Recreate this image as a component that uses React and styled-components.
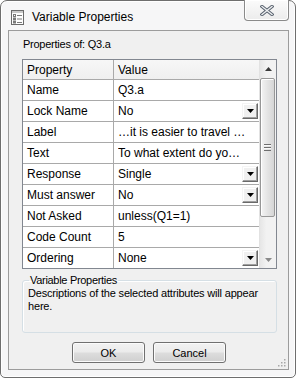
import React from 'react';
import styled, { createGlobalStyle } from 'styled-components';

const GlobalStyle = createGlobalStyle`
  html, body {
    margin: 0;
    padding: 0;
    background: #ffffff;
  }
  body {
    font-family: "Liberation Sans", Arial, sans-serif;
    color: #000;
  }
`;

const Window = styled.div`
  box-sizing: border-box;
  width: 296px;
  height: 378px;
  border: 1px solid #6e6e6e;
  border-radius: 7px 7px 5px 5px;
  background: #f6f6f7;
  box-shadow: inset 0 0 0 1px #ffffff;
  display: flex;
  flex-direction: column;
  padding: 0 6px 7px 7px;
`;

const TitleBar = styled.div`
  height: 29px;
  display: flex;
  align-items: flex-start;
  flex-shrink: 0;
`;

const TitleIcon = styled.svg`
  width: 15px;
  height: 15px;
  margin: 9px 0 0 2px;
  flex-shrink: 0;
`;

const TitleText = styled.div`
  margin: 9px 0 0 7px;
  font-size: 12px;
  line-height: 15px;
  color: #000;
`;

const CloseButton = styled.div`
  box-sizing: border-box;
  margin: -1px 0 0 auto;
  width: 45px;
  height: 21px;
  border: 1px solid #8a8a8a;
  border-top: none;
  border-radius: 0 0 4px 4px;
  background: linear-gradient(#fbfbfb, #ececec);
  box-shadow: inset 0 0 0 1px #ffffff;
  display: flex;
  align-items: center;
  justify-content: center;
`;

const Client = styled.div`
  position: relative;
  flex: 1;
  box-sizing: border-box;
  border: 1px solid #9c9c9c;
  background: #f0f0f0;
  padding: 0 10px 0 13px;
  display: flex;
  flex-direction: column;
`;

const SmallText = styled.div`
  font-size: 11px;
  line-height: 13px;
  letter-spacing: -0.25px;
`;

const OwnerLabel = styled(SmallText)`
  margin: 7px 0 0 1px;
  height: 13px;
`;

const Grid = styled.div`
  box-sizing: border-box;
  margin-top: 8px;
  width: 255px;
  height: 210px;
  border: 1px solid #828790;
  background: #ffffff;
  display: flex;
  overflow: hidden;
`;

const Table = styled.div`
  flex: 1;
  display: flex;
  flex-direction: column;
`;

const Row = styled.div`
  display: flex;
  height: ${({ $header }) => ($header ? 19 : 20)}px;
  border-bottom: 1px solid #a9a9a9;
  background: ${({ $header }) => ($header ? 'linear-gradient(#f7f7f7, #efefef)' : '#ffffff')};
  flex-shrink: 0;
`;

const Cell = styled.div`
  box-sizing: border-box;
  width: ${({ $w }) => $w}px;
  border-right: ${({ $last }) => ($last ? 'none' : '1px solid #a9a9a9')};
  padding-left: 4px;
  display: flex;
  align-items: center;
  font-size: 12px;
  white-space: nowrap;
  overflow: hidden;
`;

const CellText = styled.span`
  flex: 1;
  overflow: hidden;
`;

const DropButton = styled.div`
  box-sizing: border-box;
  width: 16px;
  height: 16px;
  margin-right: 1px;
  flex-shrink: 0;
  background: #f0f0f0;
  border: 1px solid;
  border-color: #f4f4f4 #696969 #696969 #f4f4f4;
  box-shadow: inset -1px -1px 0 #a0a0a0, inset 1px 1px 0 #ffffff;
  display: flex;
  align-items: center;
  justify-content: center;
`;

const ScrollBar = styled.div`
  width: 17px;
  flex-shrink: 0;
  background: linear-gradient(90deg, #e6e6e6, #f2f2f2 40%, #f2f2f2);
  border-left: 1px solid #e2e2e2;
  box-sizing: border-box;
  display: flex;
  flex-direction: column;
`;

const ArrowBox = styled.div`
  height: 17px;
  display: flex;
  align-items: center;
  justify-content: center;
  flex-shrink: 0;
`;

const Thumb = styled.div`
  box-sizing: border-box;
  margin: 1px 0 0 0;
  width: 15px;
  height: 139px;
  border: 1px solid #979797;
  border-radius: 2px;
  background: linear-gradient(90deg, #f4f4f4, #e4e4e4 50%, #d6d6d6);
  box-shadow: inset 1px 1px 0 #ffffff;
  display: flex;
  align-items: center;
  justify-content: center;
`;

const Spacer = styled.div`
  flex: 1;
`;

const GroupBox = styled.fieldset`
  box-sizing: border-box;
  margin: 5px 0 0 0;
  padding: 0 5px;
  width: 255px;
  min-width: 0;
  border: 1px solid #d5dfe5;
  border-radius: 3px;
  box-shadow: inset 1px 1px 0 #ffffff;
`;

const GroupLegend = styled.legend`
  padding: 0 1px;
  margin-left: 1px;
  font-size: 11px;
  line-height: 13px;
  letter-spacing: -0.3px;
`;

const Description = styled(SmallText)`
  height: 45px;
  letter-spacing: -0.18px;
`;

const ButtonRow = styled.div`
  margin-top: 9px;
  display: flex;
  justify-content: center;
  gap: 8px;
  padding-right: 2px;
`;

const PushButton = styled.div`
  box-sizing: border-box;
  width: 73px;
  height: 21px;
  border: 1px solid ${({ $default }) => ($default ? '#707070' : '#707070')};
  border-radius: 3px;
  background: linear-gradient(#f2f2f2 0%, #ebebeb 48%, #dddddd 52%, #cfcfcf 100%);
  box-shadow: inset 0 0 0 1px #fbfbfb;
  display: flex;
  align-items: center;
  justify-content: center;
  font-size: 11px;
`;

const Grip = styled.svg`
  position: absolute;
  right: 2px;
  bottom: 2px;
`;

const rows = [
  { name: 'Name', value: 'Q3.a' },
  { name: 'Lock Name', value: 'No', drop: true },
  { name: 'Label', value: '…it is easier to travel …' },
  { name: 'Text', value: 'To what extent do yo…' },
  { name: 'Response', value: 'Single', drop: true },
  { name: 'Must answer', value: 'No', drop: true },
  { name: 'Not Asked', value: 'unless(Q1=1)' },
  { name: 'Code Count', value: '5' },
  { name: 'Ordering', value: 'None', drop: true },
];

const DownTriangle = ({ color = '#000' }) => (
  <svg width="7" height="4" viewBox="0 0 7 4">
    <polygon points="0,0 7,0 3.5,4" fill={color} />
  </svg>
);

const UpTriangle = ({ color = '#000' }) => (
  <svg width="7" height="4" viewBox="0 0 7 4">
    <polygon points="0,4 7,4 3.5,0" fill={color} />
  </svg>
);

const ListIcon = () => (
  <TitleIcon viewBox="0 0 15 15">
    <rect x="1.5" y="0.5" width="12" height="14" fill="#fdfdfd" stroke="#6b6b6b" />
    <rect x="2" y="1" width="11" height="2" fill="#c9c9c9" />
    <rect x="3.5" y="4.5" width="2" height="2" fill="none" stroke="#7a7a7a" />
    <line x1="7" y1="5.5" x2="12" y2="5.5" stroke="#7a7a7a" />
    <rect x="3.5" y="8" width="2" height="2" fill="none" stroke="#7a7a7a" />
    <line x1="7" y1="9" x2="12" y2="9" stroke="#7a7a7a" />
    <rect x="3.5" y="11.5" width="2" height="1.5" fill="none" stroke="#7a7a7a" />
    <line x1="7" y1="12.5" x2="12" y2="12.5" stroke="#7a7a7a" />
  </TitleIcon>
);

const CloseGlyph = () => (
  <svg width="14" height="11" viewBox="0 0 14 11">
    <path d="M2 1.5 L12 9.5 M12 1.5 L2 9.5" stroke="#5b6470" strokeWidth="3.4" strokeLinecap="square" />
    <path d="M2 1.5 L12 9.5 M12 1.5 L2 9.5" stroke="#eef0f2" strokeWidth="1.4" strokeLinecap="square" />
  </svg>
);

const ThumbGrip = () => (
  <svg width="7" height="7" viewBox="0 0 7 7">
    <line x1="0" y1="0.5" x2="7" y2="0.5" stroke="#6f6f6f" />
    <line x1="0" y1="1.5" x2="7" y2="1.5" stroke="#fafafa" />
    <line x1="0" y1="3.5" x2="7" y2="3.5" stroke="#6f6f6f" />
    <line x1="0" y1="4.5" x2="7" y2="4.5" stroke="#fafafa" />
    <line x1="0" y1="6.5" x2="7" y2="6.5" stroke="#6f6f6f" />
  </svg>
);

const ResizeGrip = () => (
  <Grip width="10" height="10" viewBox="0 0 10 10">
    {[[8, 2], [8, 5], [5, 5], [8, 8], [5, 8], [2, 8]].map(([x, y]) => (
      <rect key={`${x}-${y}`} x={x} y={y} width="1.5" height="1.5" fill="#a8a8a8" />
    ))}
  </Grip>
);

const App = () => {
  return (
    <>
      <GlobalStyle />
      <Window>
        <TitleBar>
          <ListIcon />
          <TitleText>Variable Properties</TitleText>
          <CloseButton>
            <CloseGlyph />
          </CloseButton>
        </TitleBar>
        <Client>
          <OwnerLabel>Properties of: Q3.a</OwnerLabel>
          <Grid>
            <Table>
              <Row $header>
                <Cell $w={91}>Property</Cell>
                <Cell $w={145} $last>Value</Cell>
              </Row>
              {rows.map((row) => (
                <Row key={row.name}>
                  <Cell $w={91}>{row.name}</Cell>
                  <Cell $w={145} $last>
                    <CellText>{row.value}</CellText>
                    {row.drop && (
                      <DropButton>
                        <DownTriangle />
                      </DropButton>
                    )}
                  </Cell>
                </Row>
              ))}
            </Table>
            <ScrollBar>
              <ArrowBox>
                <UpTriangle color="#3a3a3a" />
              </ArrowBox>
              <Thumb>
                <ThumbGrip />
              </Thumb>
              <Spacer />
              <ArrowBox>
                <DownTriangle color="#8a8a8a" />
              </ArrowBox>
            </ScrollBar>
          </Grid>
          <GroupBox>
            <GroupLegend>Variable Properties</GroupLegend>
            <Description>
              Descriptions of the selected attributes will appear here.
            </Description>
          </GroupBox>
          <ButtonRow>
            <PushButton $default>OK</PushButton>
            <PushButton>Cancel</PushButton>
          </ButtonRow>
          <ResizeGrip />
        </Client>
      </Window>
    </>
  );
};

export default App;
